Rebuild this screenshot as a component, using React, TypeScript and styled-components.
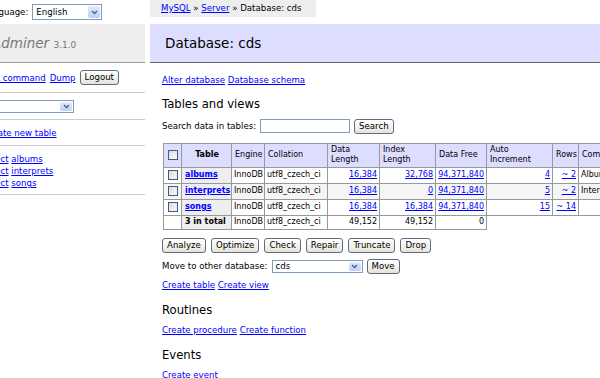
import React from 'react';
import styled, { createGlobalStyle } from 'styled-components';

const GlobalStyle = createGlobalStyle`
  html, body { margin: 0; padding: 0; background: #fff; overflow: hidden; }
  body {
    font-family: "DejaVu Sans", Verdana, sans-serif;
    font-size: 8.6px;
    line-height: 12px;
    color: #000;
  }
  a { color: #00f; }
`;

// page is scrolled a little to the right, so the menu is cut on the left
const Page = styled.div`
  display: flex;
  align-items: flex-start;
  gap: 5px;
  margin-left: -26px;
  width: 660px;
`;

const Menu = styled.div`
  flex: none;
  width: 171px;
  white-space: nowrap;
`;

const Lang = styled.div`
  display: flex;
  align-items: center;
  gap: 4px;
  height: 24px;
  padding: 0 9px;
`;

const Logo = styled.h1`
  margin: 0;
  height: 38px;
  line-height: 38px;
  padding: 0 18px;
  font-size: 13.5px;
  font-weight: normal;
  color: #777;
  background: #eee;
  border-bottom: 1px solid #999;
`;

const Brand = styled.a`
  color: #777;
  font-style: italic;
  text-decoration: none;
`;

const Version = styled.span`
  font-size: 9px;
  color: #777;
`;

const MenuBlock = styled.p<{ $pad: string }>`
  margin: 0;
  padding: ${(p) => p.$pad};
  border-bottom: 1px solid #ccc;
  display: flex;
  align-items: center;
  gap: 4px;
`;

const MenuList = styled.p<{ $pad: string }>`
  margin: 0;
  padding: ${(p) => p.$pad};
  border-bottom: 1px solid #ccc;
`;

const Main = styled.div`
  flex: 1;
  min-width: 0;
`;

const Breadcrumb = styled.div`
  width: fit-content;
  height: 17px;
  line-height: 17px;
  padding: 0 15px 0 11px;
  background: #eee;
  white-space: nowrap;
`;

const Title = styled.h2`
  margin: 7px 0 0;
  height: 38px;
  line-height: 38px;
  padding: 0 15px;
  font-size: 13.5px;
  font-weight: normal;
  background: #ddf;
  border-bottom: 1px solid #666;
`;

const Content = styled.div`
  padding-left: 12px;
`;

const Para = styled.p<{ $top?: number }>`
  margin: ${(p) => p.$top ?? 7}px 0 0;
`;

const Row = styled.div<{ $gap?: number; $top?: number }>`
  display: flex;
  align-items: center;
  gap: ${(p) => p.$gap ?? 4}px;
  margin-top: ${(p) => p.$top ?? 7}px;
  min-height: 16px;
`;

const Heading = styled.h3<{ $top?: number }>`
  margin: ${(p) => p.$top ?? 12}px 0 0;
  font-size: 11.6px;
  line-height: 14px;
  font-weight: normal;
`;

const Button = styled.button`
  font-family: inherit;
  font-size: 8.6px;
  line-height: 11px;
  height: 15px;
  margin: 0;
  padding: 0 4px;
  color: #000;
  border: 1px solid #5d6d80;
  border-radius: 3px;
  background: linear-gradient(#ffffff, #f1f0ea 60%, #e3e2da);
`;

const TextInput = styled.input`
  box-sizing: border-box;
  width: 90px;
  height: 14px;
  margin: 0;
  padding: 0 2px;
  border: 1px solid #7f9db9;
  font-family: inherit;
  font-size: 8.6px;
`;

const SelectBox = styled.span<{ $w: number; $h: number }>`
  box-sizing: border-box;
  display: inline-flex;
  width: ${(p) => p.$w}px;
  height: ${(p) => p.$h}px;
  border: 1px solid #7f9db9;
  background: #fff;
`;

const SelectText = styled.span`
  flex: 1;
  display: flex;
  align-items: center;
  padding: 0 3px;
`;

const SelectArrow = styled.span`
  width: 12px;
  margin: 1px;
  border-radius: 2px;
  display: flex;
  align-items: center;
  justify-content: center;
  background: linear-gradient(#e3ebfd, #bccff8);
`;

const Tables = styled.table`
  margin: 9px 0 0 1px;
  border-collapse: separate;
  border-spacing: 0;
  border-top: 1px solid #999;
  border-left: 1px solid #999;
  table-layout: fixed;
  width: 486px;
  font-size: 8px;
  line-height: 10px;
`;

const HeadCell = styled.td<{ $w: number }>`
  box-sizing: border-box;
  width: ${(p) => p.$w}px;
  padding: 1px 2px 2px 3px;
  border-right: 1px solid #999;
  border-bottom: 1px solid #999;
  background: #ddf;
  text-align: left;
  font-weight: normal;
  vertical-align: middle;
  white-space: nowrap;
`;

const HeadWrap = styled(HeadCell)`
  white-space: normal;
`;

const HeadTh = styled(HeadCell).attrs({ as: 'th' })`
  font-weight: bold;
  text-align: center;
`;

const Cell = styled.td<{ $odd?: boolean; $num?: boolean }>`
  padding: 1px 2px 2px;
  border-right: 1px solid #999;
  border-bottom: 1px solid #999;
  background: ${(p) => (p.$odd ? '#f5f5f5' : '#fff')};
  text-align: ${(p) => (p.$num ? 'right' : 'left')};
  white-space: nowrap;
  overflow: visible;
`;

const NameCell = styled.th`
  padding: 1px 2px 2px 3px;
  border-right: 1px solid #999;
  border-bottom: 1px solid #999;
  background: #eee;
  text-align: left;
  white-space: nowrap;
`;

const Check = styled.input.attrs({ type: 'checkbox' })`
  appearance: none;
  box-sizing: border-box;
  display: block;
  width: 10px;
  height: 10px;
  margin: 1px auto;
  border: 1px solid #3e5e88;
  background: linear-gradient(135deg, #dedcd5, #fbfbf9);
`;

const Arrow = () => (
  <svg width="7" height="5" viewBox="0 0 7 5">
    <path d="M1 1 L3.5 3.5 L6 1" fill="none" stroke="#4d6185" strokeWidth="1.4" />
  </svg>
);

const Select = ({ w, h, value }: { w: number; h: number; value?: string }) => (
  <SelectBox $w={w} $h={h}>
    <SelectText>{value}</SelectText>
    <SelectArrow>
      <Arrow />
    </SelectArrow>
  </SelectBox>
);

const tables = [
  { name: 'albums', data: '16,384', index: '32,768', free: '94,371,840', auto: '4', rows: '~ 2', comment: 'Albums' },
  { name: 'interprets', data: '16,384', index: '0', free: '94,371,840', auto: '5', rows: '~ 2', comment: 'Interprets' },
  { name: 'songs', data: '16,384', index: '16,384', free: '94,371,840', auto: '15', rows: '~ 14', comment: '' },
];

const actions = ['Analyze', 'Optimize', 'Check', 'Repair', 'Truncate', 'Drop'];

export default function App() {
  return (
    <>
      <GlobalStyle />
      <Page>
        <Menu>
          <Lang>
            Language: <Select w={70} h={16} value="English" />
          </Lang>
          <Logo>
            <Brand href="#">Adminer</Brand> <Version>3.1.0</Version>
          </Logo>
          <MenuBlock $pad="7px 9px 7px">
            <a href="#">SQL command</a>
            <a href="#">Dump</a>
            <Button>Logout</Button>
          </MenuBlock>
          <MenuBlock $pad="7px 9px 6px">
            <Select w={91} h={13} />
          </MenuBlock>
          <MenuList $pad="7px 9px 6px">
            <a href="#">Create new table</a>
          </MenuList>
          <MenuList $pad="7px 9px 5px">
            {tables.map((t) => (
              <React.Fragment key={t.name}>
                <a href="#">select</a> <a href="#">{t.name}</a>
                <br />
              </React.Fragment>
            ))}
          </MenuList>
        </Menu>

        <Main>
          <Breadcrumb>
            <a href="#">MySQL</a> » <a href="#">Server</a> » Database: cds
          </Breadcrumb>
          <Title>Database: cds</Title>
          <Content>
            <Para $top={11}>
              <a href="#">Alter database</a> <a href="#">Database schema</a>
            </Para>
            <Heading $top={11}>Tables and views</Heading>
            <Row $top={7}>
              Search data in tables: <TextInput />
              <Button>Search</Button>
            </Row>

            <Tables>
              <thead>
                <tr>
                  <HeadCell $w={18}>
                    <Check />
                  </HeadCell>
                  <HeadTh $w={50}>Table</HeadTh>
                  <HeadCell $w={33}>Engine</HeadCell>
                  <HeadCell $w={63}>Collation</HeadCell>
                  <HeadWrap $w={52}>Data Length</HeadWrap>
                  <HeadWrap $w={56}>Index Length</HeadWrap>
                  <HeadCell $w={51}>Data Free</HeadCell>
                  <HeadWrap $w={66}>Auto Increment</HeadWrap>
                  <HeadCell $w={26}>Rows</HeadCell>
                  <HeadCell $w={70}>Comment</HeadCell>
                </tr>
              </thead>
              <tbody>
                {tables.map((t, i) => {
                  const odd = i % 2 === 1;
                  return (
                    <tr key={t.name}>
                      <Cell $odd={odd}>
                        <Check />
                      </Cell>
                      <NameCell>
                        <a href="#">{t.name}</a>
                      </NameCell>
                      <Cell $odd={odd}>InnoDB</Cell>
                      <Cell $odd={odd}>utf8_czech_ci</Cell>
                      <Cell $odd={odd} $num>
                        <a href="#">{t.data}</a>
                      </Cell>
                      <Cell $odd={odd} $num>
                        <a href="#">{t.index}</a>
                      </Cell>
                      <Cell $odd={odd} $num>
                        <a href="#">{t.free}</a>
                      </Cell>
                      <Cell $odd={odd} $num>
                        <a href="#">{t.auto}</a>
                      </Cell>
                      <Cell $odd={odd} $num>
                        <a href="#">{t.rows}</a>
                      </Cell>
                      <Cell $odd={odd}>{t.comment}</Cell>
                    </tr>
                  );
                })}
                <tr>
                  <Cell />
                  <NameCell>3 in total</NameCell>
                  <Cell>InnoDB</Cell>
                  <Cell>utf8_czech_ci</Cell>
                  <Cell $num>49,152</Cell>
                  <Cell $num>49,152</Cell>
                  <Cell $num>0</Cell>
                </tr>
              </tbody>
            </Tables>

            <Row $gap={5} $top={7}>
              {actions.map((a) => (
                <Button key={a}>{a}</Button>
              ))}
            </Row>
            <Row $top={5}>
              Move to other database: <Select w={91} h={13} value="cds" />
              <Button>Move</Button>
            </Row>
            <Para $top={5}>
              <a href="#">Create table</a> <a href="#">Create view</a>
            </Para>

            <Heading>Routines</Heading>
            <Para>
              <a href="#">Create procedure</a> <a href="#">Create function</a>
            </Para>

            <Heading>Events</Heading>
            <Para>
              <a href="#">Create event</a>
            </Para>
          </Content>
        </Main>
      </Page>
    </>
  );
}
